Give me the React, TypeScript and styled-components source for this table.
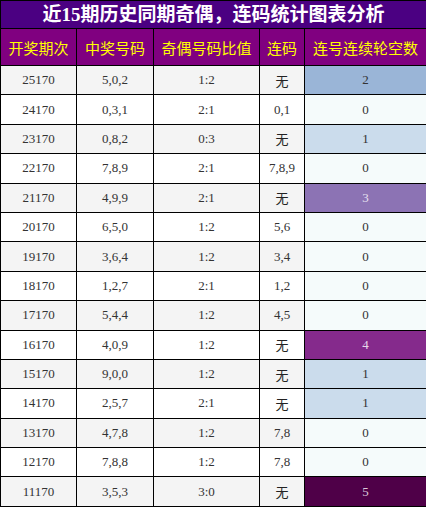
import React from "react";
import styled, { createGlobalStyle } from "styled-components";

const GlobalStyle = createGlobalStyle`
  html, body {
    margin: 0;
    padding: 0;
    background: #fff;
  }
  body {
    font-family: "Liberation Serif", "Noto Sans CJK SC", serif;
  }
`;

type Row = {
  issue: string;
  numbers: string;
  ratio: string;
  pairs: string;
  gap: number;
};

const rows: Row[] = [
  { issue: "25170", numbers: "5,0,2", ratio: "1:2", pairs: "无", gap: 2 },
  { issue: "24170", numbers: "0,3,1", ratio: "2:1", pairs: "0,1", gap: 0 },
  { issue: "23170", numbers: "0,8,2", ratio: "0:3", pairs: "无", gap: 1 },
  { issue: "22170", numbers: "7,8,9", ratio: "2:1", pairs: "7,8,9", gap: 0 },
  { issue: "21170", numbers: "4,9,9", ratio: "2:1", pairs: "无", gap: 3 },
  { issue: "20170", numbers: "6,5,0", ratio: "1:2", pairs: "5,6", gap: 0 },
  { issue: "19170", numbers: "3,6,4", ratio: "1:2", pairs: "3,4", gap: 0 },
  { issue: "18170", numbers: "1,2,7", ratio: "2:1", pairs: "1,2", gap: 0 },
  { issue: "17170", numbers: "5,4,4", ratio: "1:2", pairs: "4,5", gap: 0 },
  { issue: "16170", numbers: "4,0,9", ratio: "1:2", pairs: "无", gap: 4 },
  { issue: "15170", numbers: "9,0,0", ratio: "1:2", pairs: "无", gap: 1 },
  { issue: "14170", numbers: "2,5,7", ratio: "2:1", pairs: "无", gap: 1 },
  { issue: "13170", numbers: "4,7,8", ratio: "1:2", pairs: "7,8", gap: 0 },
  { issue: "12170", numbers: "7,8,8", ratio: "1:2", pairs: "7,8", gap: 0 },
  { issue: "11170", numbers: "3,5,3", ratio: "3:0", pairs: "无", gap: 5 },
];

const gapColors: Record<number, { bg: string; fg: string }> = {
  0: { bg: "#f5fbfb", fg: "#333" },
  1: { bg: "#cbdcec", fg: "#333" },
  2: { bg: "#9ab5d7", fg: "#333" },
  3: { bg: "#8c73b4", fg: "#e6e0f0" },
  4: { bg: "#852a8c", fg: "#e8d8ea" },
  5: { bg: "#4f0048", fg: "#dcc8da" },
};

const columns = [
  { label: "开奖期次", w: 76 },
  { label: "中奖号码", w: 77 },
  { label: "奇偶号码比值", w: 106 },
  { label: "连码", w: 45 },
  { label: "连号连续轮空数", w: 122 },
];

const Table = styled.table`
  width: 426px;
  border-collapse: collapse;
  table-layout: fixed;
  border: 1px solid #000;
`;

const Col = styled.col<{ $w: number }>`
  width: ${({ $w }) => $w}px;
`;

const TitleCell = styled.th`
  height: 27px;
  padding: 0;
  background: #4b0082;
  color: #fff;
  font-family: "Liberation Serif", "Noto Sans CJK SC", serif;
  font-size: 19px;
  font-weight: bold;
  line-height: 27px;
  border: 1px solid #000;
`;

const HeadCell = styled.th`
  height: 36px;
  padding: 0;
  background: #800080;
  color: #ffff00;
  font-family: "Noto Sans CJK SC", sans-serif;
  font-size: 15px;
  font-weight: normal;
  white-space: nowrap;
  border: 1px solid #000;
`;

const BodyRow = styled.tr<{ $odd: boolean }>`
  background: ${({ $odd }) => ($odd ? "#f4f4f4" : "#fff")};
`;

const Cell = styled.td`
  height: 28.4px;
  padding: 0;
  text-align: center;
  color: #333;
  font-family: "Liberation Serif", "Noto Sans CJK SC", serif;
  font-size: 13px;
  border: 1px solid #000;
`;

const PairCell = styled(Cell)<{ $cjk: boolean }>`
  font-family: ${({ $cjk }) =>
    $cjk ? `"Noto Sans CJK SC", sans-serif` : `"Liberation Serif", serif`};
  color: ${({ $cjk }) => ($cjk ? "#222" : "#333")};
`;

const GapCell = styled(Cell)<{ $bg: string; $fg: string }>`
  background: ${({ $bg }) => $bg};
  color: ${({ $fg }) => $fg};
`;

export default function App(): React.ReactElement {
  return (
    <>
      <GlobalStyle />
      <Table>
        <colgroup>
          {columns.map((c) => (
            <Col key={c.label} $w={c.w} />
          ))}
        </colgroup>
        <thead>
          <tr>
            <TitleCell colSpan={5}>近15期历史同期奇偶，连码统计图表分析</TitleCell>
          </tr>
          <tr>
            {columns.map((c) => (
              <HeadCell key={c.label}>{c.label}</HeadCell>
            ))}
          </tr>
        </thead>
        <tbody>
          {rows.map((r, i) => {
            const g = gapColors[r.gap];
            return (
              <BodyRow key={r.issue} $odd={i % 2 === 0}>
                <Cell>{r.issue}</Cell>
                <Cell>{r.numbers}</Cell>
                <Cell>{r.ratio}</Cell>
                <PairCell $cjk={r.pairs === "无"}>{r.pairs}</PairCell>
                <GapCell $bg={g.bg} $fg={g.fg}>
                  {r.gap}
                </GapCell>
              </BodyRow>
            );
          })}
        </tbody>
      </Table>
    </>
  );
}
